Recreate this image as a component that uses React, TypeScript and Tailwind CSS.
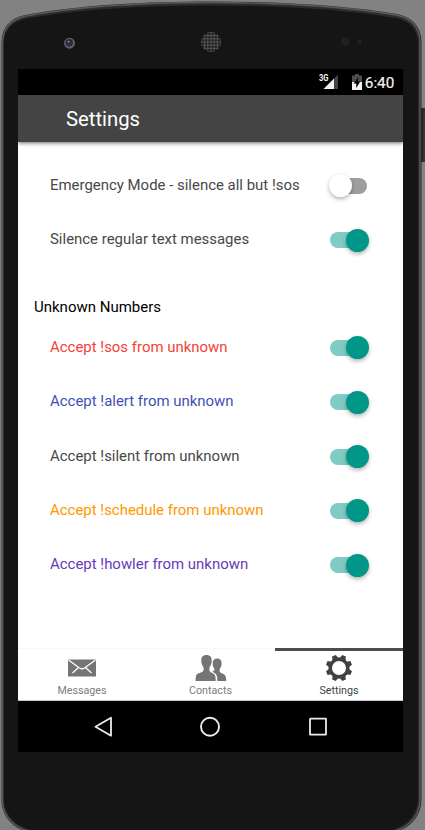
const ROBOTO = "font-['Roboto','Liberation_Sans',sans-serif]";

function DeviceFrame() {
  const dots = [];
  for (let y = -8; y <= 8; y += 3.2) {
    for (let x = -8; x <= 8; x += 3.2) {
      if (x * x + y * y < 88) dots.push([x, y]);
    }
  }
  return (
    <svg className="absolute inset-0" width="425" height="830" viewBox="0 0 425 830">
      <defs>
        <linearGradient id="side" x1="0" y1="0" x2="1" y2="0">
          <stop offset="0" stopColor="#1c1c1c" />
          <stop offset="1" stopColor="#4a4a4a" />
        </linearGradient>
      </defs>
      <rect x="421" y="108" width="6" height="54" fill="url(#side)" />
      <path d="M1.500 800V42C2 27 10 18.500 25 15C80 5 145 1.500 211 1.500S342 5 397 14C412 17 421 26 421.500 42V800C421 820 405 833 385 833H38C18 833 1.500 820 1.500 800Z" fill="#2c2c2c" />
      <path d="M2.500 800V42C3 28 11 19.500 26 16C80 6 145 2.500 211 2.500S342 6 396 15C411 18 419.500 27 420 42V800C419.500 819 404 832 385 832H38C19 832 2.500 819 2.500 800Z" fill="none" stroke="#5a5a5a" strokeWidth="1.300" />
      <path d="M4 800V43C4.500 29 12 22 27 18.500C80 9 145 5.500 211 5.500S342 9 395 18C410 21 417.500 29 418 43V800C417 817 402 830.500 385 830.500H38C20 830.500 4 817 4 800Z" fill="#151515" />
      <circle cx="69.500" cy="43.200" r="5.500" fill="#606060" />
      <circle cx="69.200" cy="42.800" r="3.700" fill="#2a2a30" />
      <circle cx="69" cy="43" r="1.800" fill="#2d2a9c" />
      <circle cx="68.500" cy="41.500" r="0.800" fill="#aaa" />
      <circle cx="211" cy="42" r="10" fill="#505050" />
      {dots.map(([x, y]) => (
        <rect key={`${x},${y}`} x={211 + x - 1} y={42 + y - 1} width="2" height="2" fill="#191919" />
      ))}
      <circle cx="345" cy="41.500" r="4" fill="#211f1f" />
      <circle cx="359.500" cy="41.500" r="2" fill="#252323" />
    </svg>
  );
}

function StatusBar() {
  return (
    <div className="flex h-[26px] items-center bg-black text-white">
      <svg width="385" height="26" viewBox="0 0 385 26">
        <text x="301" y="11.500" fontSize="8.500" fontWeight="700" fill="#f2f2f2" textLength="9.500" lengthAdjust="spacingAndGlyphs">3G</text>
        <path d="M316 9.500V20H305.500Z" fill="#f2f2f2" />
        <path d="M316 9.500L320 5.500V20H316Z" fill="#444" />
        <path d="M334 6.500H337V5H341V6.500H344V13H334Z" fill="#4d4d4d" />
        <path d="M334 13H344V21H334Z" fill="#f2f2f2" />
        <path d="M340.500 8L335.500 14.500H338.200V19L342.300 12.500H339.700Z" fill="#000" />
        <text x="346.800" y="18.700" fontSize="15" fill="#f2f2f2" stroke="#f2f2f2" strokeWidth="0.200" textLength="29.500" lengthAdjust="spacingAndGlyphs">6:40</text>
      </svg>
    </div>
  );
}

function Switch({ on }: { on: boolean }) {
  return (
    <span className="mt-[1.2px] flex h-[23px] w-[39px] items-center">
      <span className={on ? "flex h-4 w-9 items-center justify-end rounded-full bg-[#80cbc4]" : "ml-px flex h-4 w-9 items-center rounded-full bg-[#9e9e9e]"}>
        <span className={on ? "-mr-[3px] size-[23px] shrink-0 rounded-full bg-[#009688] shadow-[0_2px_4px_rgba(0,0,0,0.3)]" : "-ml-[2px] size-[23px] shrink-0 rounded-full bg-white shadow-[0_2px_4px_rgba(0,0,0,0.3)]"} />
      </span>
    </span>
  );
}

function Row({ label, color, on = true }: { label: string; color: string; on?: boolean }) {
  return (
    <div className="flex h-[54.4px] items-center justify-between pr-[34px] pl-8">
      <span className={`mb-[0.5px] text-[14.95px] leading-5 whitespace-nowrap ${color}`}>{label}</span>
      <Switch on={on} />
    </div>
  );
}

function MailIcon() {
  return (
    <svg width="28" height="26" viewBox="0 0 28 26">
      <rect y="4.500" width="28" height="17" rx="0.500" fill="#757575" />
      <path d="M0.500 5L11.500 13Q14 14.500 16.500 13L27.500 5M10.500 12.500L4.500 18M17.500 12.500L23.500 18" fill="none" stroke="#fff" strokeWidth="1.300" />
    </svg>
  );
}

function PeopleIcon() {
  return (
    <svg width="32" height="26" viewBox="0 0 32 26" fill="#757575">
      <path d="M11.500 0C15.200 0 17 2.300 16.700 6C16.500 9 15.700 10.500 14.700 12C14 14 14.200 16 15.200 16.800C17 18.200 19.600 18.400 20.300 21C20.700 23 20.700 24.500 20.700 26H0.500C0.500 24.500 0.600 23 1 21C1.600 18.300 5.500 18.200 7.500 16.800C8.700 16 9 14 8.300 12C7.300 10.500 6.500 9 6.300 6C6 2.300 7.800 0 11.500 0Z" />
      <path d="M22.200 3.500C25.300 3.500 26.800 5.500 26.600 8.700C26.500 11.200 25.700 12.500 24.900 13.700C24.200 15.500 24.700 17 25.500 17.600C27.500 19 30 19.200 30.700 21.500C31.200 23.200 31.200 24.800 31.200 26H22.300C22.300 23 22.200 20.500 20.800 19C19.800 18 18.300 17.300 17.200 16.700C18.700 16.300 20 15.500 19.300 13.700C18.400 12.500 17.800 11.200 17.700 8.700C17.500 5.500 19 3.500 22.200 3.500Z" />
    </svg>
  );
}

function GearIcon() {
  return (
    <svg width="26" height="26" viewBox="-13 -13 26 26" fill="#424242">
      <circle r="8.700" fill="none" stroke="#424242" strokeWidth="3.400" />
      {[22.5, 67.5, 112.5, 157.5, 202.5, 247.5, 292.5, 337.5].map((a) => (
        <path key={a} d="M-4 -8.800Q-2.500 -10 -2 -13.200H2Q2.500 -10 4 -8.800Z" transform={`rotate(${a})`} />
      ))}
    </svg>
  );
}

function TabBar() {
  return (
    <nav className="flex h-[53px] border-b border-[#c8c8c8] bg-white text-[10.7px] leading-[13px] text-[#7c7c7c]">
      <div className="flex w-32 flex-col items-center border-t border-[#f8f8f8] pt-[6px]">
        <MailIcon />
        <span className="mt-[3px]">Messages</span>
      </div>
      <div className="flex w-[129px] flex-col items-center border-t border-[#f8f8f8] pt-[6px]">
        <PeopleIcon />
        <span className="mt-[3px]">Contacts</span>
      </div>
      <div className="flex w-32 flex-col items-center border-t-[3px] border-[#4c4c4c] pt-1 text-[#424242]">
        <GearIcon />
        <span className="mt-[3px]">Settings</span>
      </div>
    </nav>
  );
}

function NavigationBar() {
  return (
    <div className="flex h-[51px] items-center justify-between bg-black pr-[75.5px] pl-[74.5px]">
      <svg width="20" height="22" viewBox="0 0 20 22" fill="none" stroke="#ececec" strokeWidth="1.800">
        <path d="M18 1.700V19.700L2.500 10.700Z" strokeLinejoin="round" />
      </svg>
      <svg width="22" height="22" viewBox="0 0 22 22" fill="none" stroke="#ececec" strokeWidth="1.900">
        <circle cx="11" cy="10.700" r="9" />
      </svg>
      <svg width="20" height="22" viewBox="0 0 20 22" fill="none" stroke="#ececec" strokeWidth="1.800">
        <rect x="2" y="2.700" width="16" height="16" rx="0.500" />
      </svg>
    </div>
  );
}

export default function App() {
  return (
    <div className={`relative h-[830px] w-[425px] overflow-hidden bg-[#828282] pt-[69px] pl-[18px] ${ROBOTO}`}>
      <DeviceFrame />
      <div className="relative flex h-[683px] w-[385px] flex-col overflow-hidden bg-white">
        <StatusBar />
        <header className="z-10 flex h-[47px] shrink-0 items-center bg-[#444] pt-px pl-12 text-[20.3px] text-white shadow-[0_1px_4px_rgba(0,0,0,0.6)]">
          Settings
        </header>
        <main className="flex-1 pt-4">
          <Row label="Emergency Mode - silence all but !sos" color="text-[#484848]" on={false} />
          <Row label="Silence regular text messages" color="text-[#484848]" />
          <h2 className="mt-[30px] pl-4 text-[15px] leading-5 text-black">Unknown Numbers</h2>
          <div className="mt-[3.2px]">
            <Row label="Accept !sos from unknown" color="text-[#f44336]" />
            <Row label="Accept !alert from unknown" color="text-[#3f51b5]" />
            <Row label="Accept !silent from unknown" color="text-[#484848]" />
            <Row label="Accept !schedule from unknown" color="text-[#ff9800]" />
            <Row label="Accept !howler from unknown" color="text-[#673ab7]" />
          </div>
        </main>
        <TabBar />
        <NavigationBar />
      </div>
    </div>
  );
}
